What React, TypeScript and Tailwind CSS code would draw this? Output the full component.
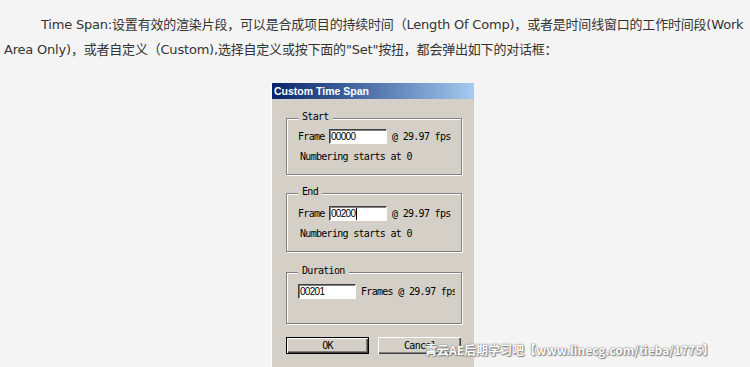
import type { ReactNode } from "react";

const mono = { fontFamily: '"DejaVu Sans Mono", "Liberation Mono", monospace' };

function Group({ label, className, children }: { label: string; className: string; children: ReactNode }) {
  return (
    <div
      className={`relative border border-[#808080] shadow-[inset_1px_1px_0_#ffffff,1px_1px_0_#ffffff] ${className}`}
    >
      <span className="absolute -top-[8px] left-[11px] bg-[#d4d0c8] px-[4px] text-[10px] leading-[12px] tracking-[-0.7px] text-black">
        {label}
      </span>
      {children}
    </div>
  );
}

function Field({ value, caret }: { value: string; caret?: boolean }) {
  return (
    <div
      className="flex h-[15px] w-[58px] shrink-0 items-center border border-t-[#404040] border-l-[#404040] border-r-[#ffffff] border-b-[#ffffff] bg-white pl-[1px] text-[10px] leading-none text-black shadow-[inset_1px_1px_0_#808080]"
      style={{ fontFamily: '"Liberation Sans", Arial, sans-serif' }}
    >
      {value}
      {caret && <span className="ml-[1px] h-[12px] w-[1px] bg-black" />}
    </div>
  );
}

function Btn({ label, primary }: { label: string; primary?: boolean }) {
  return (
    <div
      className={`flex h-[17px] w-[83px] items-center justify-center bg-[#d4d0c8] text-[10px] leading-none tracking-[-0.7px] text-black ${
        primary
          ? "border border-black shadow-[inset_1px_1px_0_#ffffff,inset_-1px_-1px_0_#404040,inset_-2px_-2px_0_#808080]"
          : "border-t border-l border-t-white border-l-white shadow-[inset_-1px_-1px_0_#404040,inset_-2px_-2px_0_#808080]"
      }`}
    >
      {label}
    </div>
  );
}

export default function App() {
  return (
    <div
      className="relative h-[367px] w-[750px] overflow-hidden bg-[#f4f4f4]"
      style={{ fontFamily: '"DejaVu Sans", "Noto Sans CJK SC", sans-serif' }}
    >
      {/* intro text */}
      <p className="whitespace-nowrap px-[4px] pt-[12px] indent-[37px] text-[13px] leading-[25px] tracking-[-0.2px] text-[#333333]">
        Time Span:设置有效的渲染片段，可以是合成项目的持续时间（Length Of Comp)，或者是时间线窗口的工作时间段(Work
        <br />
        Area Only)，或者自定义（Custom),选择自定义或按下面的"Set"按扭，都会弹出如下的对话框：
      </p>

      {/* dialog */}
      <div className="ml-[271px] mt-[21px] w-[203px] border-l border-l-white bg-[#d4d0c8] pb-[30px]" style={mono}>
        <div
          className="h-[16px] bg-gradient-to-r from-[#0a246a] to-[#a6caf0] pl-[2px] text-[10.5px] font-bold leading-[16px] text-white"
          style={{ fontFamily: '"Liberation Sans", Arial, sans-serif' }}
        >
          Custom Time Span
        </div>

        <div className="flex flex-col pl-[14px] pr-[12px] pt-[19px]">
          <Group label="Start" className="h-[57px] pl-[11px] pt-[10px]">
            <div className="flex items-center gap-[2px] text-[10px] leading-[12px] tracking-[-0.7px] text-black">
              <span className="w-[29px]">Frame</span>
              <Field value="00000" />
              <span className="ml-[3px]">@ 29.97 fps</span>
            </div>
            <div className="ml-[2px] mt-[7px] text-[10px] leading-[12px] tracking-[-0.7px] text-black">
              Numbering starts at 0
            </div>
          </Group>

          <Group label="End" className="mt-[18px] h-[59px] pl-[11px] pt-[12px]">
            <div className="flex items-center gap-[2px] text-[10px] leading-[12px] tracking-[-0.7px] text-black">
              <span className="w-[29px]">Frame</span>
              <Field value="00200" caret />
              <span className="ml-[3px]">@ 29.97 fps</span>
            </div>
            <div className="ml-[2px] mt-[7px] text-[10px] leading-[12px] tracking-[-0.7px] text-black">
              Numbering starts at 0
            </div>
          </Group>

          <Group label="Duration" className="mt-[20px] h-[52px] pl-[11px] pt-[11px]">
            <div className="flex w-[157px] items-center gap-[5px] overflow-hidden whitespace-nowrap text-[10px] leading-[12px] tracking-[-0.7px] text-black">
              <Field value="00201" />
              <span>Frames @ 29.97 fps</span>
            </div>
          </Group>

          <div className="mt-[13px] flex gap-[9px]">
            <Btn label="OK" primary />
            <Btn label="Cancel" />
          </div>
        </div>
      </div>

      {/* watermark */}
      <div
        className="absolute left-[425px] top-[342px] whitespace-nowrap text-[12px] font-bold leading-[16px] text-white [text-shadow:0_0_1px_#6b6b6b,0_0_2px_#8a8a8a,1px_1px_1px_#888888]"
        style={{ fontFamily: '"Noto Sans CJK SC", "DejaVu Sans", sans-serif' }}
      >
        霄云AE后期学习吧【www.linecg.com/tieba/1775】
      </div>
    </div>
  );
}
